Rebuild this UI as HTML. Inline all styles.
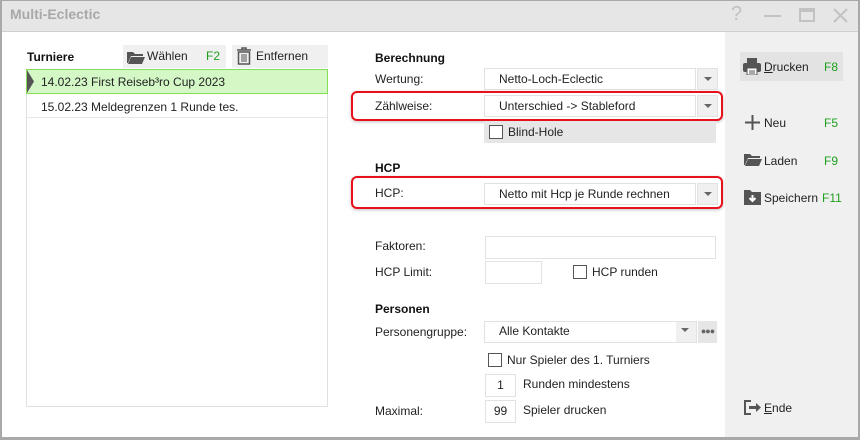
<!DOCTYPE html>
<html><head><meta charset="utf-8"><style>
*{box-sizing:border-box;margin:0;padding:0}
body{width:860px;height:440px;overflow:hidden;background:#fff;font-family:"Liberation Sans","DejaVu Sans",sans-serif;font-size:12px;color:#222;position:relative}
.a{position:absolute}
.b{font-weight:bold;font-size:12px;color:#111}
.lbl{position:absolute;font-size:12px;color:#222}
.combo{position:absolute;background:#fff;border:1px solid #e2e2e2;height:22px;line-height:20px;padding-left:14px}
.arr{position:absolute;background:#f0f0f0;border:1px solid #e2e2e2;width:21px;height:22px}
.arr:after{content:"";position:absolute;left:6px;top:8px;border-left:4px solid transparent;border-right:4px solid transparent;border-top:4px solid #666}
.red{position:absolute;border:2px solid #e8101a;border-radius:6px;box-shadow:0 1px 3px rgba(0,0,0,.25)}
.inp{position:absolute;border:1px solid #e2e2e2;background:#fff;text-align:center;line-height:21px}
.cb{position:absolute;width:14px;height:14px;border:1px solid #555;background:#fff}
.g{color:#1ea01e}
</style></head><body>
<!-- frame -->
<div class="a" style="left:0;top:0;width:860px;height:440px;border:2px solid #a9a9a9;border-top:1px solid #a9a9a9"></div>
<div class="a" style="left:2px;top:1px;width:856px;height:31px;background:#e6e6e6;border-bottom:1px solid #cfcfcf"></div>
<div class="a" style="left:10px;top:6px;font-size:14px;font-weight:bold;color:#a8a8a8">Multi-Eclectic</div>
<div class="a" style="left:731px;top:3px;font-size:20px;color:#c2c2c2">?</div>
<div class="a" style="left:764px;top:15px;width:17px;height:2px;background:#c2c2c2"></div>
<div class="a" style="left:799px;top:8px;width:16px;height:14px;border:2px solid #c2c2c2;border-top-width:4px"></div>
<svg class="a" style="left:833px;top:8px" width="15" height="15"><path d="M1 1L14 14M14 1L1 14" stroke="#c2c2c2" stroke-width="2"/></svg>
<!-- right panel -->
<div class="a" style="left:725px;top:32px;width:133px;height:405px;background:#f0f0f0"></div>
<div class="a" style="left:2px;top:437px;width:856px;height:3px;background:#a9a9a9"></div>

<!-- left -->
<div class="a b" style="left:27px;top:50px">Turniere</div>
<div class="a" style="left:123px;top:45px;width:103px;height:23px;background:#f0f0f0"></div>
<svg class="a" style="left:127px;top:50px" width="18" height="14"><path d="M0 2h6l2 2h8v2H4L1 13H0z" fill="#555"/><path d="M4 7h14l-3 7H1z" fill="#555"/></svg>
<div class="a" style="left:147px;top:49px">Wählen</div>
<div class="a g" style="left:206px;top:49px">F2</div>
<div class="a" style="left:232px;top:45px;width:96px;height:23px;background:#f0f0f0"></div>
<svg class="a" style="left:237px;top:47px" width="14" height="18"><path d="M0 3h14M5 3V1h4v2" stroke="#555" stroke-width="1.5" fill="none"/><rect x="1.5" y="5" width="11" height="12" fill="none" stroke="#555" stroke-width="1.5"/><path d="M5 7v8M7 7v8M9 7v8" stroke="#555"/></svg>
<div class="a" style="left:256px;top:49px">Entfernen</div>
<div class="a" style="left:26px;top:69px;width:302px;height:338px;border:1px solid #e0e0e0"></div>
<div class="a" style="left:26px;top:69px;width:302px;height:25px;background:#d4f7c6;border:1px solid #86dd55"></div>
<svg class="a" style="left:27px;top:70px" width="8" height="23"><path d="M0 0L7 11.5L0 23z" fill="#555"/></svg>
<div class="a" style="left:41px;top:75px">14.02.23 First Reiseb³ro Cup 2023</div>
<div class="a" style="left:41px;top:100px">15.02.23 Meldegrenzen 1 Runde tes.</div>
<div class="a" style="left:27px;top:117px;width:300px;height:1px;background:#e8e8e8"></div>

<!-- middle -->
<div class="a b" style="left:375px;top:51px">Berechnung</div>
<div class="lbl" style="left:375px;top:72px">Wertung:</div>
<div class="combo" style="left:484px;top:68px;width:212px">Netto-Loch-Eclectic</div>
<div class="arr" style="left:697px;top:68px"></div>
<div class="red" style="left:351px;top:91px;width:372px;height:30px"></div>
<div class="lbl" style="left:375px;top:99px">Zählweise:</div>
<div class="combo" style="left:484px;top:95px;width:212px">Unterschied -&gt; Stableford</div>
<div class="arr" style="left:697px;top:95px"></div>
<div class="a" style="left:484px;top:121px;width:232px;height:22px;background:#e6e6e6"></div>
<div class="cb" style="left:489px;top:125px"></div>
<div class="lbl" style="left:508px;top:125px">Blind-Hole</div>

<div class="a b" style="left:375px;top:161px">HCP</div>
<div class="red" style="left:351px;top:176px;width:372px;height:33px"></div>
<div class="lbl" style="left:375px;top:186px">HCP:</div>
<div class="combo" style="left:484px;top:183px;width:212px">Netto mit Hcp je Runde rechnen</div>
<div class="arr" style="left:697px;top:183px"></div>

<div class="lbl" style="left:375px;top:239px">Faktoren:</div>
<div class="inp" style="left:485px;top:236px;width:231px;height:23px"></div>
<div class="lbl" style="left:375px;top:265px">HCP Limit:</div>
<div class="inp" style="left:485px;top:261px;width:57px;height:23px"></div>
<div class="cb" style="left:573px;top:265px"></div>
<div class="lbl" style="left:592px;top:265px">HCP runden</div>

<div class="a b" style="left:375px;top:302px">Personen</div>
<div class="lbl" style="left:375px;top:325px">Personengruppe:</div>
<div class="combo" style="left:484px;top:321px;width:213px;line-height:19px">Alle Kontakte</div>
<div class="a" style="left:676px;top:322px;width:20px;height:20px;background:#f0f0f0"></div>
<div class="a" style="left:681px;top:328px;border-left:4px solid transparent;border-right:4px solid transparent;border-top:4px solid #666"></div>
<div class="a" style="left:698px;top:321px;width:19px;height:22px;background:#e6e6e6;font-size:9px;color:#666;text-align:center;line-height:20px;letter-spacing:-1px">●●●</div>
<div class="cb" style="left:488px;top:353px"></div>
<div class="lbl" style="left:507px;top:353px">Nur Spieler des 1. Turniers</div>
<div class="inp" style="left:485px;top:374px;width:31px;height:23px">1</div>
<div class="lbl" style="left:523px;top:377px">Runden mindestens</div>
<div class="lbl" style="left:375px;top:404px">Maximal:</div>
<div class="inp" style="left:485px;top:400px;width:31px;height:23px">99</div>
<div class="lbl" style="left:523px;top:403px">Spieler drucken</div>

<!-- right buttons -->
<div class="a" style="left:740px;top:52px;width:103px;height:29px;background:#e3e3e3"></div>
<svg class="a" style="left:743px;top:58px" width="18" height="17"><rect x="4" y="0" width="10" height="5" fill="#555"/><rect x="0" y="5" width="18" height="9" rx="2" fill="#555"/><rect x="4" y="10" width="10" height="7" fill="#fff" stroke="#555"/><path d="M6 13h6M6 15h6" stroke="#555"/></svg>
<div class="a" style="left:764px;top:60px"><u>D</u>rucken</div>
<div class="a g" style="left:824px;top:60px">F8</div>
<svg class="a" style="left:745px;top:115px" width="15" height="15"><path d="M7.5 0v15M0 7.5h15" stroke="#555" stroke-width="2"/></svg>
<div class="a" style="left:764px;top:116px">Neu</div>
<div class="a g" style="left:824px;top:116px">F5</div>
<svg class="a" style="left:744px;top:153px" width="18" height="14"><path d="M0 1h6l2 2h8v2H4L1 12H0z" fill="#555"/><path d="M4 6h14l-3 7H1z" fill="#555"/></svg>
<div class="a" style="left:764px;top:154px">Laden</div>
<div class="a g" style="left:824px;top:154px">F9</div>
<svg class="a" style="left:744px;top:189px" width="17" height="16"><path d="M0 1h6l2 2h9v13H0z" fill="#555"/><path d="M8.5 6v6M5.5 9l3 3 3-3" stroke="#fff" stroke-width="2" fill="none"/></svg>
<div class="a" style="left:764px;top:191px">Speichern</div>
<div class="a g" style="left:822px;top:191px">F11</div>
<svg class="a" style="left:744px;top:400px" width="18" height="15"><path d="M7 1H1v13h6" stroke="#555" stroke-width="2" fill="none"/><path d="M5 7.5h8" stroke="#555" stroke-width="3"/><path d="M12 3l5 4.5-5 4.5z" fill="#555"/></svg>
<div class="a" style="left:764px;top:401px"><u>E</u>nde</div>
</body></html>
